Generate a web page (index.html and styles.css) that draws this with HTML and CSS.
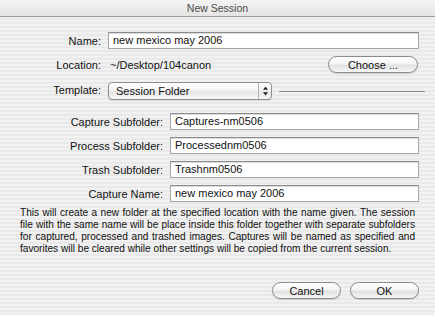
FILE: index.html
```html
<!DOCTYPE html>
<html>
<head>
<title>New Session</title>
<link rel="stylesheet" href="styles.css">
</head>
<body>
<div class="window">
  <div class="titlebar">New Session</div>

  <div class="main">
    <div class="top-grid">
      <label class="lbl">Name:</label>
      <div class="field">new mexico may 2006</div>

      <label class="lbl">Location:</label>
      <div class="loc-row">
        <span class="loc">~/Desktop/104canon</span>
        <button class="btn choose">Choose ...</button>
      </div>

      <label class="lbl">Template:</label>
      <div class="tpl-row">
        <div class="popup">
          <span class="popup-text">Session Folder</span>
          <span class="popup-arrows">
            <svg width="7" height="10" viewBox="0 0 7 10"><path d="M3.5 0.5 L6 3.8 L1 3.8 Z M3.5 9.5 L6 6.2 L1 6.2 Z" fill="#222"/></svg>
          </span>
        </div>
        <div class="rule"></div>
      </div>
    </div>

    <div class="sub-grid">
      <label class="lbl">Capture Subfolder:</label>
      <div class="field">Captures-nm0506</div>

      <label class="lbl">Process Subfolder:</label>
      <div class="field">Processednm0506</div>

      <label class="lbl">Trash Subfolder:</label>
      <div class="field">Trashnm0506</div>

      <label class="lbl">Capture Name:</label>
      <div class="field">new mexico may 2006</div>
    </div>

    <p class="info">This will create a new folder at the specified location with the name given. The session file with the same name will be place inside this folder together with separate subfolders for captured, processed and trashed images. Captures will be named as specified and favorites will be cleared while other settings will be copied from the current session.</p>

    <div class="actions">
      <button class="btn">Cancel</button>
      <button class="btn">OK</button>
    </div>
  </div>
</div>
</body>
</html>
```

FILE: styles.css
```css
body {
  margin: 0;
  font-family: "Liberation Sans", "DejaVu Sans", sans-serif;
  color: #111;
}

.window {
  width: 435px;
  height: 315px;
  overflow: hidden;
  background-color: #ededed;
  background-image: repeating-linear-gradient(to bottom, #f1f1f1 0px, #f1f1f1 2px, #e9e9e9 2px, #e9e9e9 4px);
}

.titlebar {
  height: 16px;
  line-height: 16px;
  text-align: center;
  font-size: 10.5px;
  color: #4a4a4a;
  background: linear-gradient(to bottom, #f4f4f4, #e4e4e4);
  border-bottom: 1px solid #9a9a9a;
}

.main {
  padding: 15px 16px 0 0;
}

.lbl {
  text-align: right;
  font-size: 11px;
  align-self: center;
}

.field {
  height: 15px;
  line-height: 15px;
  padding-left: 4px;
  font-size: 11px;
  background: #fff;
  border: 1px solid #a6a6a6;
  border-top-color: #8c8c8c;
  box-shadow: inset 0 1px 0 #dcdcdc;
}

.top-grid {
  display: grid;
  grid-template-columns: 101px 311px;
  column-gap: 7px;
  row-gap: 7px;
}

.loc-row, .tpl-row {
  display: flex;
  align-items: center;
}

.loc {
  font-size: 11px;
  padding-left: 2px;
  flex: 1;
}

.btn {
  font-family: inherit;
  font-size: 11px;
  color: #111;
  height: 17px;
  padding: 0;
  border: 1px solid #8a8a8a;
  border-radius: 9px;
  background: linear-gradient(to bottom, #ffffff 0%, #f4f4f4 45%, #e2e2e2 55%, #f6f6f6 100%);
  box-shadow: 0 1px 1px rgba(0, 0, 0, 0.12);
}

.choose {
  width: 90px;
  margin-right: 1px;
}

.tpl-row {
  margin-top: 2px;
}

.popup {
  width: 162px;
  height: 16px;
  display: flex;
  align-items: center;
  border: 1px solid #8d8d8d;
  border-radius: 4px;
  background: linear-gradient(to bottom, #ffffff 0%, #f5f5f5 45%, #e6e6e6 55%, #f7f7f7 100%);
  box-shadow: 0 1px 1px rgba(0, 0, 0, 0.1);
}

.popup-text {
  flex: 1;
  padding-left: 7px;
  font-size: 11px;
}

.popup-arrows {
  width: 12px;
  height: 16px;
  border-left: 1px solid #b5b5b5;
  display: flex;
  align-items: center;
  justify-content: center;
}

.rule {
  flex: 1;
  height: 1px;
  margin-left: 7px;
  margin-right: -6px;
  background: #8e8e8e;
}

.sub-grid {
  display: grid;
  grid-template-columns: 163px 249px;
  column-gap: 7px;
  row-gap: 7px;
  margin-top: 13px;
}

.info {
  margin: 5px 4px 0 20px;
  font-size: 10.1px;
  line-height: 12px;
  text-align: justify;
}

.actions {
  display: flex;
  justify-content: flex-end;
  gap: 9px;
  margin-top: 27px;
}

.actions .btn {
  width: 69px;
}
```
